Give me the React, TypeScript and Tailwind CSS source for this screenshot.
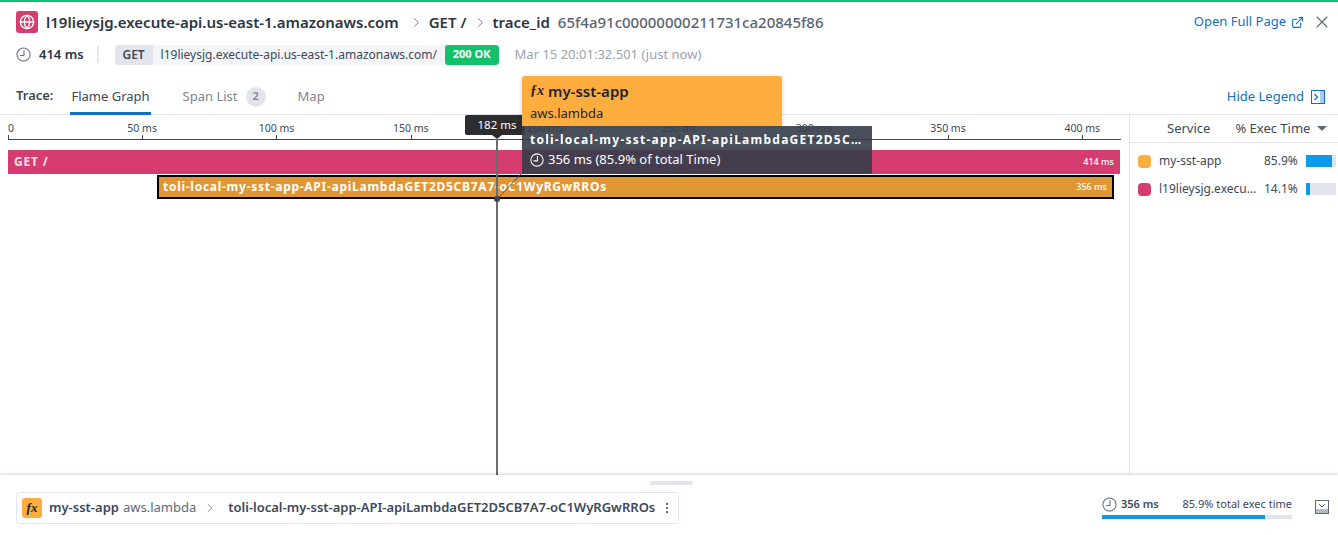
import { Globe, X, ExternalLink, ChevronRight, EllipsisVertical } from "lucide-react";

const ticks = ["50 ms", "100 ms", "150 ms", "200 ms", "250 ms", "300 ms", "350 ms", "400 ms"];

const legend = [
  { name: "my-sst-app", pct: "85.9%", color: "bg-[#ffad3e]", bar: "w-[26px]" },
  { name: "l19lieysjg.execu...", pct: "14.1%", color: "bg-[#d53c6f]", bar: "w-[4px]" },
];

const ClockIcon = ({ size, className }: { size: number; className?: string }) => (
  <svg width={size} height={size} viewBox="0 0 16 16" fill="none" stroke="currentColor" strokeWidth="1.2" className={className}>
    <circle cx="8" cy="8" r="7" />
    <path d="M8.5 3.5 V9 H4" />
  </svg>
);

const App = () => {
  return (
    <div className="relative flex h-[535px] w-full flex-col overflow-hidden bg-white font-['Noto_Sans',sans-serif] text-[#3c4858]">
      <div className="h-[2px] bg-[#14c16b]" />

      {/* title row */}
      <div className="flex h-[40px] items-center pl-4 pr-[6px]">
        <div className="flex h-[22px] w-[22px] items-center justify-center rounded-[3px] bg-[#d53c6f] text-white">
          <Globe size={16} strokeWidth={2} />
        </div>
        <span className="ml-2 text-[15px] font-semibold text-[#2c3542]">l19lieysjg.execute-api.us-east-1.amazonaws.com</span>
        <ChevronRight size={15} className="ml-[10px] text-[#6b7686]" strokeWidth={1.5} />
        <span className="ml-[5px] text-[15px] font-semibold text-[#2c3542]">GET /</span>
        <ChevronRight size={15} className="ml-[7px] text-[#6b7686]" strokeWidth={1.5} />
        <span className="ml-[4px] text-[15px] font-semibold text-[#2c3542]">trace_id</span>
        <span className="ml-2 text-[15px] font-medium text-[#5a6472]">65f4a91c00000000211731ca20845f86</span>
        <span className="ml-auto text-[13px] text-[#0f6fc4]">Open Full Page</span>
        <ExternalLink size={13} className="ml-[5px] text-[#0f6fc4]" />
        <X size={20} strokeWidth={1.3} className="ml-[8px] text-[#5f6a78]" />
      </div>

      {/* meta row */}
      <div className="mt-[2px] flex h-[21px] items-center pl-4 text-[12px]">
        <ClockIcon size={15} className="text-[#6b7686]" />
        <span className="ml-2 text-[13px] font-semibold text-[#2c3542]">414 ms</span>
        <div className="ml-[13px] h-[17px] w-[2px] bg-[#e4e7ee]" />
        <div className="ml-4 flex h-5 items-center overflow-hidden rounded-[3px] bg-[#f4f5f9]">
          <span className="flex h-full w-[38px] items-center justify-center bg-[#e2e5ee] font-semibold text-[#3c4858]">GET</span>
          <span className="w-[292px] pl-2 text-[#3c4858]">l19lieysjg.execute-api.us-east-1.amazonaws.com/</span>
          <span className="flex h-full w-[54px] items-center justify-center rounded-[3px] bg-[#14c16b] text-[11px] font-bold text-white">200 OK</span>
        </div>
        <span className="ml-4 text-[13px] text-[#9aa2ae]">Mar 15 20:01:32.501 (just now)</span>
      </div>

      {/* tabs */}
      <div className="mt-[14px] flex h-[36px] items-stretch border-b border-[#e2e5ee] pl-4 pr-[13px]">
        <span className="flex items-center pb-[2px] text-[13px] font-semibold text-[#3c4858]">Trace:</span>
        <div className="relative ml-[18px] flex items-center text-[13px] text-[#3c4858]">
          Flame Graph
          <div className="absolute inset-x-[-1px] bottom-[-1px] h-[3px] bg-[#0f6fc4]" />
        </div>
        <div className="ml-[33px] flex items-center text-[13px] text-[#7c8592]">
          Span List
          <span className="ml-2 flex h-5 w-5 items-center justify-center rounded-full bg-[#e2e5ee] text-[11px] font-semibold">2</span>
        </div>
        <span className="ml-8 flex items-center text-[13px] text-[#7c8592]">Map</span>
        <div className="ml-auto flex items-center text-[#0f6fc4]">
          <span className="text-[13px]">Hide Legend</span>
          <svg width="14" height="14" viewBox="0 0 14 14" className="ml-[7px]" fill="none">
            <rect x="0.5" y="0.5" width="13" height="13" stroke="currentColor" />
            <path d="M3.5 4 L6.5 7 L3.5 10" stroke="currentColor" strokeWidth="1.2" />
            <rect x="9" y="1" width="4" height="12" fill="#a9cdee" />
          </svg>
        </div>
      </div>

      {/* flame graph + legend */}
      <div className="flex h-[360px]">
        <div className="relative flex-1 pl-2">
          <div className="relative h-[25px] w-[1113px] border-b border-[#3c4858]">
            <span className="absolute left-0 top-[6px] text-[10.5px] leading-[14px] text-[#3c4858]">0</span>
            <div className="absolute bottom-0 left-0 h-[4px] w-px bg-[#3c4858]" />
            <div className="flex h-full pl-[67px] pt-[6px]">
              {ticks.map((t) => (
                <div key={t} className="relative w-[134.3px] shrink-0 text-center text-[10.5px] leading-[14px] text-[#3c4858]">
                  {t}
                  <div className="absolute bottom-0 left-1/2 h-[4px] w-px bg-[#3c4858]" />
                </div>
              ))}
            </div>
          </div>

          <div className="mt-[10px] flex h-6 w-[1112px] items-center justify-between bg-[#d53c6f] pl-[6px] pr-[6px] text-white">
            <span className="text-[12px] font-bold tracking-[0.8px] text-[#fbe3ec]">GET /</span>
            <span className="text-[9px] font-medium">414 ms</span>
          </div>
          <div className="ml-[149px] mt-[1px] flex h-6 w-[957px] items-center justify-between border-2 border-black bg-[#e09733] pl-[4px] pr-[5px] text-white">
            <span className="text-[12px] font-bold tracking-[0.73px]">toli-local-my-sst-app-API-apiLambdaGET2D5CB7A7-oC1WyRGwRROs</span>
            <span className="text-[9px] font-medium">356 ms</span>
          </div>

          {/* crosshair */}
          <div className="absolute bottom-0 left-[496px] top-[24px] w-[2px] bg-[#6c6c70]" />
          <div className="absolute left-[465px] top-0 flex h-[20px] w-[60px] items-center justify-center rounded-[2px] bg-[#2d2d2f] pl-1 text-[11.5px] text-white">182 ms</div>
          <div className="absolute left-[492px] top-[20px] h-0 w-0 border-x-[5px] border-t-[4px] border-x-transparent border-t-[#2d2d2f]" />
          <div className="absolute left-[494px] top-[81px] h-[6px] w-[6px] rounded-full bg-[#3d4451]" />
          <svg className="absolute left-[497px] top-[58px]" width="26" height="27" viewBox="0 0 26 27" fill="none">
            <path d="M25 0 L0 26" stroke="#4a4f5c" strokeWidth="1" />
          </svg>
        </div>

        {/* legend */}
        <div className="w-[209px] shrink-0 border-l border-[#e2e5ee]">
          <div className="flex h-[28px] items-center border-b border-[#e2e5ee] text-[13px] text-[#3c4858]">
            <span className="ml-[37px]">Service</span>
            <span className="ml-[25px]">% Exec Time</span>
            <div className="ml-[7px] h-0 w-0 border-x-[5px] border-t-[5px] border-x-transparent border-t-[#5f6a78]" />
          </div>
          <div className="pt-[4px]">
            {legend.map((row) => (
              <div key={row.name} className="flex h-7 items-center text-[12px] text-[#3c4858]">
                <div className={`ml-2 h-[13px] w-[13px] rounded-[4px] ${row.color}`} />
                <span className="ml-2 w-[105px] whitespace-nowrap">{row.name}</span>
                <span className="w-[42px]">{row.pct}</span>
                <div className="h-3 w-[30px] bg-[#e2e5ee]">
                  <div className={`h-full bg-[#0b9be8] ${row.bar}`} />
                </div>
              </div>
            ))}
          </div>
        </div>
      </div>

      {/* popover over the graph */}
      <div className="absolute left-[522px] top-[76px] h-[50px] w-[260px] rounded-t-[3px] bg-[#ffad3e] px-2 pt-[4px] text-[#1d2430] shadow-[0_1px_4px_rgba(0,0,0,0.2)]">
        <div className="flex items-center text-[15px] font-semibold leading-[22px]">
          <span className="mr-[4px] font-['Liberation_Serif',serif] text-[14px] italic">ƒx</span>
          my-sst-app
        </div>
        <div className="mt-[1px] text-[13px] leading-[20px]">aws.lambda</div>
      </div>
      <div className="absolute left-[522px] top-[126px] w-[350px] bg-[#353d4a]/90 text-white">
        <div className="flex h-[24px] items-center px-2 pt-[4px] text-[12px] font-bold tracking-[1.25px]">
          toli-local-my-sst-app-API-apiLambdaGET2D5C…
        </div>
        <div className="flex h-[24px] items-center px-2 pb-[4px] text-[13px]">
          <ClockIcon size={14} />
          <span className="ml-[4px]">356 ms (85.9% of total Time)</span>
        </div>
      </div>

      {/* bottom bar */}
      <div className="relative flex flex-1 items-center pl-4 pr-[9px] shadow-[0_-1px_3px_rgba(0,0,0,0.18)]">
        <div className="absolute left-[650px] top-[6px] h-1 w-[43px] rounded-full bg-[#e2e5ee]" />
        <div className="mt-[6px] flex h-[32px] w-[663px] items-center rounded-[4px] border border-[#e2e5ee] pl-[5px]">
          <div className="flex h-5 w-5 items-center justify-center rounded-[3px] bg-[#ffad3e] font-['Liberation_Serif',serif] text-[13px] font-bold italic text-[#1d2430]">fx</div>
          <span className="ml-[7px] text-[13px] font-semibold text-[#3c4858]">my-sst-app</span>
          <span className="ml-1 text-[13px] text-[#5f6a78]">aws.lambda</span>
          <ChevronRight size={14} strokeWidth={1.3} className="ml-[7px] text-[#6b7686]" />
          <span className="ml-[11px] text-[13px] font-semibold text-[#3c4858]">toli-local-my-sst-app-API-apiLambdaGET2D5CB7A7-oC1WyRGwRROs</span>
          <EllipsisVertical size={14} className="ml-auto mr-[4px] text-[#5f6a78]" />
        </div>

        <div className="ml-auto mt-[4px] w-[190px]">
          <div className="flex h-[18px] items-center text-[11px]">
            <ClockIcon size={15} className="text-[#6b7686]" />
            <span className="ml-[4px] font-semibold">356 ms</span>
            <span className="ml-auto text-[11px]">85.9% total exec time</span>
          </div>
          <div className="mt-[1px] h-1 bg-[#e2e5ee]">
            <div className="h-full w-[163px] bg-[#0b9be8]" />
          </div>
        </div>
        <svg width="14" height="14" viewBox="0 0 14 14" className="ml-[23px] mt-[4px] text-[#5f6a78]" fill="none">
          <rect x="0.5" y="0.5" width="13" height="13" stroke="currentColor" />
          <path d="M4 4 L7 7 L10 4" stroke="currentColor" strokeWidth="1" />
          <rect x="1" y="9" width="12" height="4" fill="#b5bcc7" />
        </svg>
      </div>
    </div>
  );
};

export default App;
